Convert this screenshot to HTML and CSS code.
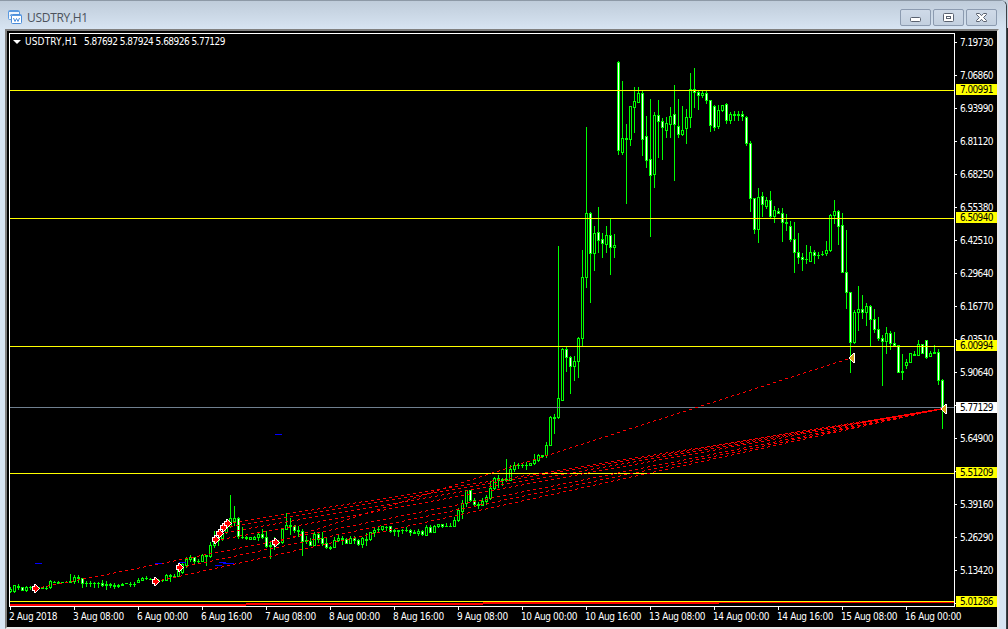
FILE: index.html
```html
<!DOCTYPE html>
<html lang="en">
<head>
    <meta charset="UTF-8">
    <title>USDTRY,H1</title>
    <link rel="stylesheet" href="styles.css">
</head>
<body>
    <div class="window">
        <div class="titlebar">
            <svg class="chart-icon" width="15" height="15" viewBox="0 0 15 15">
                <rect x="0.5" y="0.5" width="11" height="9" rx="1" fill="#eef5fd" stroke="#5b9ae0"/>
                <path d="M1 1.5h10" stroke="#5b9ae0" stroke-width="1"/>
                <path d="M2 6l1.5-2 1.5 2" fill="none" stroke="#5b9ae0"/>
                <rect x="3.5" y="4.5" width="10" height="9" rx="1" fill="#fff" stroke="#4a8ddb"/>
                <path d="M4 5.5h9" stroke="#5b9ae0" stroke-width="1"/>
                <path d="M5.5 8l1.5 3.5 1.5-3 1.5 3 1.5-3.5" fill="none" stroke="#4a8ddb"/>
            </svg>
            <span class="title">USDTRY,H1</span>
            <div class="buttons">
                <div class="btn">
                    <svg width="29" height="15" viewBox="0 0 29 15"><rect x="9.5" y="7.5" width="10" height="4" rx="1" fill="#fff" stroke="#5a6270"/></svg>
                </div>
                <div class="btn">
                    <svg width="29" height="15" viewBox="0 0 29 15"><rect x="9.5" y="3.5" width="10" height="8" rx="1" fill="#fff" stroke="#5a6270"/><rect x="12.5" y="6.5" width="4" height="2" fill="#fff" stroke="#5a6270"/></svg>
                </div>
                <div class="btn">
                    <svg width="29" height="15" viewBox="0 0 29 15"><path d="M9.5 3.5h3l2 2.2 2-2.2h3v1l-3 3 3 3v1h-3l-2-2.2-2 2.2h-3v-1l3-3-3-3z" fill="#fff" stroke="#5a6270"/></svg>
                </div>
            </div>
        </div>
        <div class="client">
            <div class="plot">
                <svg id="chart" width="946" height="574" viewBox="9 33 946 574" shape-rendering="crispEdges"></svg>
                <div class="quote"><i class="caret"></i><span class="symbol">USDTRY,H1</span><span>5.87692 5.87924 5.68926 5.77129</span></div>
            </div>
            <div class="prices">
                <div class="price">7.19730</div>
                <div class="price">7.06860</div>
                <div class="price">6.93990</div>
                <div class="price">6.81120</div>
                <div class="price">6.68250</div>
                <div class="price">6.55380</div>
                <div class="price">6.42510</div>
                <div class="price">6.29640</div>
                <div class="price">6.16770</div>
                <div class="price">6.03510</div>
                <div class="price">5.90640</div>
                <div class="price"></div>
                <div class="price">5.64900</div>
                <div class="price"></div>
                <div class="price">5.39160</div>
                <div class="price">5.26290</div>
                <div class="price">5.13420</div>
                <div class="price">5.00550</div>
                <div class="tag tag-700">7.00991</div>
                <div class="tag tag-650">6.50940</div>
                <div class="tag tag-600">6.00994</div>
                <div class="tag tag-bid">5.77129</div>
                <div class="tag tag-551">5.51209</div>
                <div class="tag tag-501">5.01286</div>
            </div>
            <div class="times">
                <div class="time">2 Aug 2018</div>
                <div class="time">3 Aug 08:00</div>
                <div class="time">6 Aug 00:00</div>
                <div class="time">6 Aug 16:00</div>
                <div class="time">7 Aug 08:00</div>
                <div class="time">8 Aug 00:00</div>
                <div class="time">8 Aug 16:00</div>
                <div class="time">9 Aug 08:00</div>
                <div class="time">10 Aug 00:00</div>
                <div class="time">10 Aug 16:00</div>
                <div class="time">13 Aug 08:00</div>
                <div class="time">14 Aug 00:00</div>
                <div class="time">14 Aug 16:00</div>
                <div class="time">15 Aug 08:00</div>
                <div class="time">16 Aug 00:00</div>
            </div>
        </div>
    </div>
    <script src="script.js"></script>
</body>
</html>
```
FILE: styles.css
```css
body {
    margin: 0;
    width: 1008px;
    height: 629px;
    overflow: hidden;
    background: linear-gradient(#c6d1dd 28px, #26282b 28px);
    font-family: "DejaVu Sans Condensed", "DejaVu Sans", sans-serif;
}
.window {
    width: 1007px;
    height: 629px;
    box-sizing: border-box;
    background-color: #d7e4f2;
    border-top: 1px solid #8d99a6;
    border-right: 1px solid #3c4147;
    border-radius: 0 6px 0 0;
}
.titlebar {
    display: flex;
    align-items: center;
    height: 28px;
    padding: 0 9px 0 8px;
    background: linear-gradient(#bfccda, #d7e4f2);
    box-sizing: border-box;
    border-radius: 0 6px 0 0;
}
.chart-icon {
    margin-top: 4px;
}
.title {
    margin: 5px 0 0 4px;
    font-family: "Open Sans", sans-serif;
    font-size: 12px;
    letter-spacing: -0.3px;
    line-height: 16px;
    color: #4c535c;
}
.buttons {
    display: flex;
    gap: 2px;
    margin: 5px 0 0 auto;
}
.btn {
    width: 29px;
    height: 15px;
    border: 1px solid #8c9bb0;
    border-radius: 2px;
    background: linear-gradient(#cfdae8, #c3d0df);
}
.btn svg {
    display: block;
}
.client {
    display: grid;
    grid-template-columns: 946px 1fr;
    grid-template-rows: 574px 1fr;
    width: 988px;
    height: 594px;
    margin-left: 5px;
    padding: 2px 0 0 2px;
    border: 2px solid #808080;
    border-right-color: #e8e8e8;
    border-bottom-color: #e8e8e8;
    background-color: #000;
    color: #fff;
    font-size: 10px;
}
.plot {
    position: relative;
}
.plot svg {
    display: block;
}
.quote {
    position: absolute;
    left: 4px;
    top: 2px;
    display: flex;
    align-items: center;
    height: 13px;
    letter-spacing: -0.53px;
    white-space: pre;
}
.caret {
    border: 4px solid transparent;
    border-top-color: #fff;
    border-bottom: 0;
    margin-right: 4px;
}
.symbol {
    width: 59px;
    letter-spacing: 0.15px;
}
.prices {
    position: relative;
    padding-top: 1px;
    height: 572px;
    letter-spacing: -0.6px;
}
.price {
    display: flex;
    align-items: center;
    height: 16px;
    margin-bottom: 17px;
}
.price::before {
    content: "";
    width: 2px;
    height: 1px;
    margin-right: 3px;
    background-color: #fff;
}
.price:nth-child(18) {
    margin-bottom: 0;
}
/* level tags cover the axis labels under them */
.tag {
    position: absolute;
    left: 1px;
    width: 37px;
    height: 11px;
    padding-left: 4px;
    line-height: 11px;
    background-color: #ff0;
    color: #000;
}
.tag-700 { top: 51px; }
.tag-650 { top: 179px; }
.tag-600 { top: 307px; }
.tag-bid { top: 369px; background-color: #fff; }
.tag-551 { top: 434px; }
.tag-501 { top: 563px; }
.times {
    grid-column: 1 / 3;
    display: flex;
    overflow: hidden;
}
.time {
    flex: 0 0 64px;
    line-height: 13px;
    letter-spacing: -0.38px;
    white-space: nowrap;
}
.time::before {
    content: "";
    display: block;
    width: 1px;
    height: 3px;
    margin-left: 1px;
    background-color: #fff;
}
.up, .down {
    fill: #0f0;
}
.hollow {
    fill: #000;
}
.solid {
    fill: #fff;
}
.level {
    fill: #ff0;
}
.bid {
    fill: #708090;
}
.trade {
    fill: #f00;
}
.frame {
    fill: #fff;
}
.stop {
    fill: #00f;
}
.buy {
    fill: #f00;
    stroke: #fff;
}
.sell {
    fill: #daa520;
}
```
FILE: script.js
```js
// one candle per entry: high, body top, body bottom, low, 1 = up / 0 = down
const candles = [
    [587,589,591,592,1],[585,585,591,592,1],[584,586,587,589,1],[587,587,590,590,0],[586,587,590,591,1],
    [586,587,587,589,1],[587,587,588,590,1],[587,587,588,588,1],[587,587,588,588,1],[586,588,588,589,1],
    [580,581,587,588,1],[581,582,582,582,1],[581,582,583,583,1],[582,582,582,582,1],[581,582,582,582,1],
    [574,581,582,582,1],[575,577,581,583,1],[575,577,578,582,1],[578,578,583,587,0],[581,583,583,586,1],
    [581,583,583,586,1],[582,583,583,587,1],[582,583,583,587,1],[580,583,585,586,0],[581,584,585,589,1],
    [583,584,585,587,0],[583,585,586,588,1],[584,585,586,587,1],[583,584,585,585,1],[583,583,583,583,1],
    [582,584,584,586,1],[582,584,584,586,1],[578,580,582,582,1],[577,578,580,580,1],[576,578,578,579,1],
    [578,579,579,579,1],[577,580,581,581,1],[579,580,580,581,1],[579,580,580,581,1],[574,575,580,580,1],
    [574,575,576,581,0],[574,576,576,577,1],[566,569,576,576,1],[562,564,572,573,1],[557,559,565,567,1],
    [555,557,559,561,1],[557,557,561,563,0],[559,561,561,562,1],[554,555,561,561,1],[555,555,556,565,1],
    [542,545,556,557,1],[531,541,545,547,1],[534,537,540,545,1],[529,533,538,540,1],[524,527,532,533,1],
    [495,518,526,527,1],[506,518,521,525,1],[517,518,536,538,0],[527,537,537,538,1],[536,537,538,539,1],
    [537,537,539,539,1],[536,537,539,539,1],[533,534,537,540,1],[529,534,537,538,0],[531,537,546,547,0],
    [541,545,546,558,1],[537,541,545,549,1],[540,542,543,544,1],[529,529,542,543,1],[513,525,529,529,1],
    [518,525,526,534,1],[525,526,530,532,0],[526,530,531,536,1],[529,531,541,555,0],[536,540,541,543,1],
    [538,541,545,545,0],[532,534,545,545,1],[532,534,539,542,0],[532,538,543,545,0],[538,543,547,548,0],
    [546,547,548,549,1],[537,540,547,547,1],[535,538,540,541,1],[536,538,539,544,1],[538,539,543,543,0],
    [536,538,543,543,1],[536,538,540,543,0],[539,540,544,545,0],[537,538,544,547,1],[533,539,540,545,1],
    [532,532,539,540,1],[528,530,532,536,1],[526,529,529,531,1],[526,526,529,530,1],[526,527,527,530,1],
    [526,526,531,532,0],[529,530,531,535,1],[530,530,531,536,1],[529,530,530,533,1],[527,530,530,531,1],
    [529,530,532,535,0],[530,532,533,533,1],[529,531,533,535,1],[530,531,534,535,0],[525,527,535,535,1],
    [525,527,532,532,0],[525,526,532,532,1],[524,524,526,527,1],[524,524,526,527,0],[523,526,526,526,1],
    [523,526,526,526,1],[517,520,526,526,1],[508,510,520,521,1],[500,503,511,518,1],[490,490,503,506,1],
    [490,490,500,501,0],[498,500,504,505,0],[502,504,505,508,1],[498,501,505,505,1],[495,497,501,504,1],
    [481,488,498,499,1],[477,478,488,489,1],[475,478,480,487,1],[478,479,480,485,1],[459,479,480,481,1],
    [465,469,480,480,1],[462,465,469,471,1],[463,465,465,468,1],[463,465,465,467,1],[462,465,465,469,1],
    [463,463,465,465,1],[454,460,463,464,1],[454,455,460,461,1],[455,455,456,457,1],[442,445,455,457,1],
    [416,417,445,445,1],[414,417,418,433,1],[246,398,417,418,1],[348,349,400,400,1],[347,349,357,371,0],
    [356,357,366,393,0],[356,361,366,380,1],[337,338,361,377,1],[250,277,338,345,1],[127,213,277,287,1],
    [212,213,253,302,0],[226,233,253,270,1],[207,232,240,252,0],[233,239,243,257,0],[226,235,244,252,1],
    [219,235,247,274,0],[234,245,247,257,1],[61,62,150,154,0],[81,138,152,154,1],[124,138,139,203,1],
    [106,106,139,145,1],[87,101,107,132,1],[87,93,102,102,1],[91,93,139,155,0],[116,136,160,167,0],
    [99,159,175,236,0],[112,115,174,187,1],[100,115,121,157,0],[118,121,127,159,0],[117,123,130,137,1],
    [107,116,124,137,1],[85,114,124,180,0],[99,126,134,137,0],[106,130,134,135,1],[109,117,128,143,1],
    [73,89,117,127,1],[68,89,92,107,0],[91,92,95,109,0],[91,93,95,97,1],[91,93,100,103,0],
    [100,100,125,131,0],[105,106,127,130,0],[105,110,126,128,1],[105,105,110,111,1],[103,104,120,123,0],
    [112,114,120,123,1],[111,114,115,120,1],[111,114,115,120,1],[111,114,116,120,0],[116,117,143,145,0],
    [141,143,198,211,0],[198,198,229,233,0],[188,197,229,242,1],[192,196,204,216,0],[197,200,206,208,1],
    [191,200,216,218,0],[206,210,216,222,1],[208,211,213,213,0],[208,213,222,241,0],[214,222,223,230,1],
    [221,226,239,241,0],[222,239,252,272,0],[233,252,257,263,0],[253,257,259,270,0],[245,259,259,263,1],
    [246,252,261,261,1],[250,252,255,263,0],[252,255,255,258,1],[251,254,254,255,1],[241,250,253,255,1],
    [214,215,250,251,1],[200,211,215,223,1],[210,211,226,244,0],[213,225,272,272,0],[230,272,292,308,0],
    [292,292,342,372,0],[310,312,342,343,1],[286,309,312,330,1],[295,309,312,318,0],[303,306,312,325,1],
    [305,306,319,345,0],[309,319,329,332,0],[317,329,338,340,0],[335,338,341,385,0],[327,333,341,353,1],
    [331,333,343,349,0],[332,343,345,346,0],[345,345,372,372,0],[354,371,372,379,1],[359,362,365,368,1],
    [353,353,362,362,1],[351,354,355,355,1],[340,344,355,355,1],[344,344,353,353,0],[340,340,357,358,0],
    [351,353,356,356,1],[345,352,353,353,1],[349,352,380,384,0],[379,380,408,428,0]
];

// open x, open y, close x, close y
const trades = [
    [35,588,943,408],[155,581,943,408],[180,567,943,408],[215,540,943,408],
    [219,533,943,408],[224,527,943,408],[227,523,943,408],[275,542,852,357]
];
const levels = [90, 218, 346, 473, 601];
const stops = [[35,563,7],[155,563,7],[179,562,7],[219,562,7],[223,563,11],[215,565,7],[275,434,7]];
const buys = [[35,588],[155,581],[179,567],[215,539],[219,533],[223,527],[227,523],[275,542]];
const sells = [[849,357],[941,408]];

function rect(cls, x, y, w, h) {
    return `<rect class="${cls}" x="${x}" y="${y}" width="${w}" height="${h}"/>`;
}

let out = '';

candles.forEach(([high, top, bottom, low, up], i) => {
    const x = 10 + i * 4;
    out += rect(up ? 'up' : 'down', x, high, 1, low - high + 1);
    out += rect(up ? 'up' : 'down', x - 1, top, 3, bottom - top + 1);
    if (bottom - top > 1) {
        out += rect(up ? 'hollow' : 'solid', x, top + 1, 1, bottom - top - 1);
    }
});

levels.forEach(y => out += rect('level', 10, y, 944, 1));
out += rect('bid', 10, 407, 944, 1);

// moving average at the bottom edge
out += rect('trade', 10, 604, 236, 2);
out += rect('trade', 246, 603, 237, 2);
out += rect('trade', 483, 602, 236, 2);
out += rect('trade', 719, 602, 235, 1);

// dashed lines are stepped pixel by pixel, 3 on and 3 off
trades.forEach(([x1, y1, x2, y2]) => {
    for (let x = x1; x <= x2; x++) {
        if ((x - x1) % 6 < 3) {
            out += rect('trade', x, Math.round(y1 + (y2 - y1) * (x - x1) / (x2 - x1)), 1, 1);
        }
    }
});

stops.forEach(([x, y, w]) => out += rect('stop', x, y, w, 1));

// arrows: white outline with a filled core
buys.forEach(([x, y]) => {
    out += `<path class="frame" d="M${x - 3} ${y - 2}h2v-2h2v1h1v1h1v1h1v1h1v1h-1v1h-1v1h-1v1h-1v1h-2v-2h-2z"/>`;
    out += `<path class="trade" d="M${x - 2} ${y - 1}h2v-2h1v1h1v1h1v1h1v1h-1v1h-1v1h-1v1h-1v-2h-2z"/>`;
});
sells.forEach(([x, y]) => {
    out += `<path class="frame" d="M${x} ${y}l4-4h2v10h-2l-4-4z"/>`;
    out += `<path class="sell" d="M${x + 1} ${y}l3-3h1v8h-1l-3-3z"/>`;
});

out += rect('frame', 9, 33, 946, 1) + rect('frame', 9, 606, 946, 1);
out += rect('frame', 9, 33, 1, 574) + rect('frame', 954, 33, 1, 574);

document.getElementById('chart').innerHTML = out;
```
